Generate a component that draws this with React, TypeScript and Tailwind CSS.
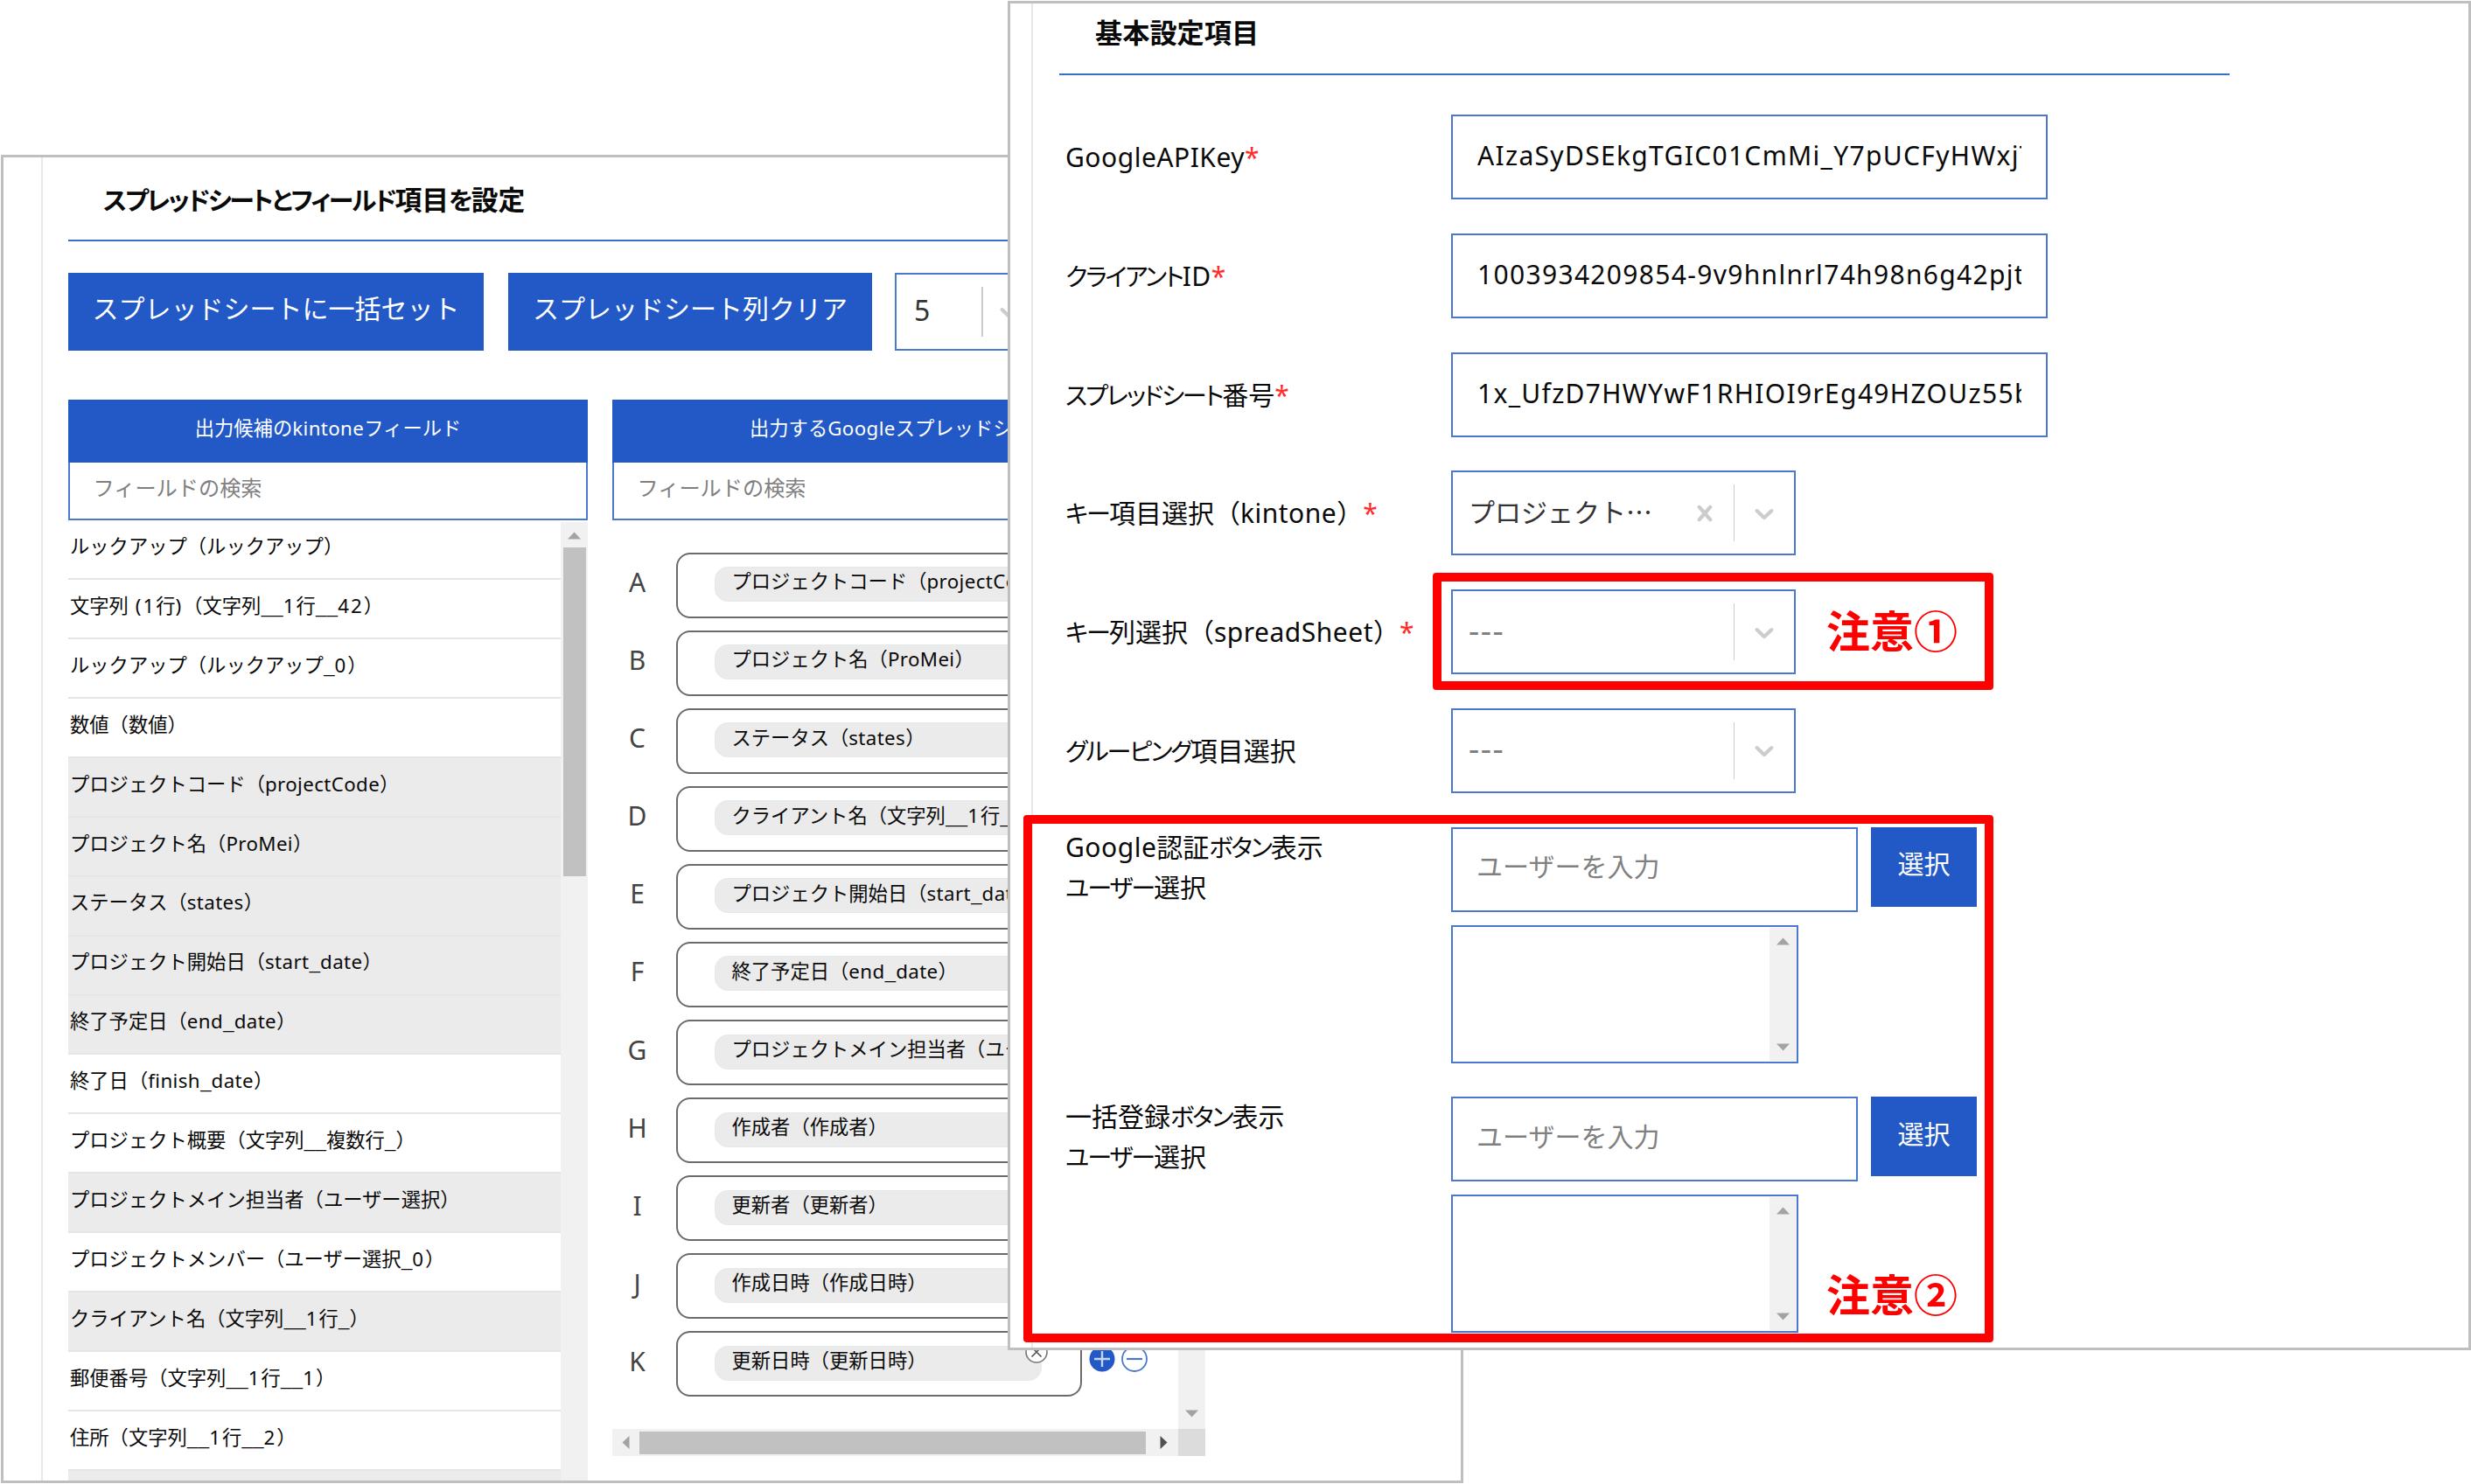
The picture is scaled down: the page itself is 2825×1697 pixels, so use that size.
import React from 'react';
import { clsx } from 'clsx';

type TextVariant = 'full' | 'narrow';

// Latin, digits, underscores and kana each get their own tracking
const TEXT_RUNS = /(_+|[\x20-\x5e\x60-\x7e]+|[\u3041-\u30ff]+)/;

const Mixed: React.FC<{ text: string; variant?: TextVariant }> = ({ text, variant = 'full' }) => (
  <>
    {text.split(TEXT_RUNS).filter(Boolean).map((run, i) => {
      if (run[0] === '_') {
        return <span key={i} className="text-[1.36em] leading-[0] font-light">{run}</span>;
      }
      if (/^[\x20-\x40]/.test(run)) {
        return <span key={i} className="tracking-[0.09em]">{run}</span>;
      }
      if (/^[\x41-\x7e]/.test(run)) {
        return <span key={i} className="tracking-[0.017em]">{run}</span>;
      }
      if (variant === 'narrow' && /^[\u3041-\u30ff]/.test(run)) {
        return <span key={i} className="text-[0.94em] tracking-[-0.075em] [font-feature-settings:'palt']">{run}</span>;
      }
      return <span key={i}>{run}</span>;
    })}
  </>
);

const fields = [
  { label: 'ルックアップ（ルックアップ）' },
  { label: '文字列 (1行)（文字列__1行__42）' },
  { label: 'ルックアップ（ルックアップ_0）' },
  { label: '数値（数値）' },
  { label: 'プロジェクトコード（projectCode）', used: true },
  { label: 'プロジェクト名（ProMei）', used: true },
  { label: 'ステータス（states）', used: true },
  { label: 'プロジェクト開始日（start_date）', used: true },
  { label: '終了予定日（end_date）', used: true },
  { label: '終了日（finish_date）' },
  { label: 'プロジェクト概要（文字列__複数行_）' },
  { label: 'プロジェクトメイン担当者（ユーザー選択）', used: true },
  { label: 'プロジェクトメンバー（ユーザー選択_0）' },
  { label: 'クライアント名（文字列__1行_）', used: true },
  { label: '郵便番号（文字列__1行__1）' },
  { label: '住所（文字列__1行__2）' },
  { label: '', used: true },
];

const columns = [
  ['A', 'プロジェクトコード（projectCode）'],
  ['B', 'プロジェクト名（ProMei）'],
  ['C', 'ステータス（states）'],
  ['D', 'クライアント名（文字列__1行_）'],
  ['E', 'プロジェクト開始日（start_date）'],
  ['F', '終了予定日（end_date）'],
  ['G', 'プロジェクトメイン担当者（ユーザー選択）'],
  ['H', '作成者（作成者）'],
  ['I', '更新者（更新者）'],
  ['J', '作成日時（作成日時）'],
  ['K', '更新日時（更新日時）'],
];

const Triangle: React.FC<{ dir: 'up' | 'down' | 'left' | 'right'; dark?: boolean }> = ({ dir, dark }) => {
  const points = {
    up: '0,11.5 7.5,3.5 15,11.5',
    down: '0,3.5 7.5,11.5 15,3.5',
    left: '11.5,0 3.5,7.5 11.5,15',
    right: '3.5,0 11.5,7.5 3.5,15',
  };
  return (
    <svg width="15" height="15" viewBox="0 0 15 15" className={clsx('shrink-0', dark ? 'fill-[#505050]' : 'fill-[#a3a3a3]')}>
      <polygon points={points[dir]} />
    </svg>
  );
};

const Chevron = () => (
  <svg width="36" height="36" viewBox="0 0 20 20" className="shrink-0 fill-[#cccccc]">
    <path d="M4.516 7.548c0.436-0.446 1.043-0.481 1.576 0l3.908 3.747 3.908-3.747c0.533-0.481 1.141-0.446 1.574 0 0.436 0.445 0.408 1.197 0 1.615-0.406 0.418-4.695 4.502-4.695 4.502-0.217 0.223-0.502 0.335-0.787 0.335s-0.57-0.112-0.789-0.335c0 0-4.287-4.084-4.695-4.502s-0.436-1.17 0-1.615z" />
  </svg>
);

const Cross = () => (
  <svg width="36" height="36" viewBox="0 0 20 20" className="shrink-0 fill-[#cccccc]">
    <path d="M14.348 14.849c-0.469 0.469-1.229 0.469-1.697 0l-2.651-3.030-2.651 3.029c-0.469 0.469-1.229 0.469-1.697 0-0.469-0.469-0.469-1.229 0-1.697l2.758-3.15-2.759-3.152c-0.469-0.469-0.469-1.228 0-1.697s1.228-0.469 1.697 0l2.652 3.031 2.651-3.031c0.469-0.469 1.228-0.469 1.697 0s0.469 1.229 0 1.697l-2.758 3.152 2.758 3.15c0.469 0.469 0.469 1.229 0 1.698z" />
  </svg>
);

const SearchTable: React.FC<{ title: string; className: string; titleClass: string }> = ({ title, className, titleClass }) => (
  <div className={clsx('shrink-0', className)}>
    <div className={clsx('flex h-[72px] items-center bg-[#2259c7] pb-1.5 text-[22.3px] text-white', titleClass)}>
      <span><Mixed text={title} /></span>
    </div>
    <div className="flex h-[66px] items-center border-2 border-t-0 border-[#4a78d0] pb-1.5 pl-[26.5px] text-[24.2px] text-[#808080]">
      フィールドの検索
    </div>
  </div>
);

const FieldList = () => (
  <div className="flex h-[1099px] w-[594px] overflow-hidden">
    <ul className="w-[563px]">
      {fields.map((field, i) => (
        <li
          key={i}
          className={clsx(
            'flex h-[67.94px] items-center border-b-[2.5px] border-[#e2e6e6] pb-1.5 pl-0.5 text-[22.3px]',
            field.used && 'bg-[#ebebeb]'
          )}
        >
          <span><Mixed text={field.label} /></span>
        </li>
      ))}
    </ul>
    <div className="mt-[1.5px] flex w-[31px] flex-col items-center bg-[#f1f1f1] pt-2">
      <Triangle dir="up" />
      <div className="mt-[6.5px] h-[376px] w-[26px] bg-[#c1c1c1]" />
    </div>
  </div>
);

const ColumnRow: React.FC<{ letter: string; label: string; last: boolean }> = ({ letter, label, last }) => (
  <div className="flex h-[75px] shrink-0 items-center">
    <div className="w-[57px] pb-1.5 text-center text-[30px] text-[#444444]">{letter}</div>
    <div className="ml-[15.5px] flex h-full w-[464px] shrink-0 items-center rounded-[16px] border-2 border-[#6b6b6b] pb-0.5 pl-[42px]">
      <div className="relative flex h-[40px] w-[374px] items-center rounded-[15px] border border-[#e4e9e9] bg-[#ebebeb] pb-[5px] pl-[19px] text-[22.3px]">
        <span><Mixed text={label} /></span>
        <svg width="26" height="26" viewBox="0 0 26 26" className="absolute -top-[7px] right-[-8px]">
          <circle cx="13" cy="13" r="12" fill="#fff" stroke="#777" strokeWidth="1.6" />
          <path d="M7.5 7.5l11 11m0-11l-11 11" stroke="#555" strokeWidth="1.7" />
        </svg>
      </div>
    </div>
    {last && (
      <div className="flex gap-[7px] pb-[11px] pl-[8px]">
        <svg width="30" height="30" viewBox="0 0 30 30">
          <circle cx="15" cy="15" r="14.5" fill="#2259c7" />
          <path d="M6 15h18M15 6v18" stroke="#c5d5f2" strokeWidth="2.4" />
        </svg>
        <svg width="30" height="30" viewBox="0 0 30 30">
          <circle cx="15" cy="15" r="14" fill="#fff" stroke="#4a78d0" strokeWidth="1.8" />
          <path d="M6 15h18" stroke="#4a78d0" strokeWidth="2.2" />
        </svg>
      </div>
    )}
  </div>
);

const ColumnList = () => (
  <div className="w-[678px]">
    <div className="flex h-[1039px]">
      <div className="flex w-[647px] flex-col gap-[14.1px] pt-[36.5px]">
        {columns.map(([letter, label], i) => (
          <ColumnRow key={letter} letter={letter} label={label} last={i === columns.length - 1} />
        ))}
      </div>
      <div className="flex w-[31px] flex-col items-center justify-end bg-[#f1f1f1] pb-[10px]">
        <Triangle dir="down" />
      </div>
    </div>
    <div className="flex h-[31px]">
      <div className="flex w-[647px] items-center bg-[#f1f1f1] pl-2">
        <Triangle dir="left" />
        <div className="ml-2 h-[26px] w-[579px] bg-[#c1c1c1]" />
        <div className="ml-[13px]">
          <Triangle dir="right" dark />
        </div>
      </div>
      <div className="w-[31px] bg-[#dcdcdc]" />
    </div>
  </div>
);

const MappingWindow = () => (
  <section className="absolute top-[177px] left-[1px] flex h-[1519px] w-[1672px] overflow-hidden border-[3px] border-[#bfbfbf] bg-white">
    <div className="w-[45px] shrink-0 border-r-2 border-[#e8e8e8]" />
    <div className="w-[1600px] shrink-0 pl-[29px]">
      <h2 className="flex h-[96px] items-center border-b-2 border-[#3a6dce] pt-[3px] pl-[40px] text-[30.8px] font-bold">
        <span><Mixed text="スプレッドシートとフィールド項目を設定" variant="narrow" /></span>
      </h2>
      <div className="mt-[36px] flex h-[89px]">
        <button className="w-[475px] bg-[#2259c7] pb-2 text-[30px] text-white">スプレッドシートに一括セット</button>
        <button className="ml-[28px] w-[416px] bg-[#2259c7] pb-2 text-[30px] text-white">スプレッドシート列クリア</button>
        <div className="ml-[26px] flex w-[180px] items-center border-2 border-[#4a78d0] pl-[20px] text-[32px] text-[#333333]">
          <span className="w-[77px] pb-1">5</span>
          <div className="mr-3 h-[57px] w-[1.5px] bg-[#cccccc]" />
          <Chevron />
        </div>
      </div>
      <div className="mt-[56px] flex">
        <SearchTable title="出力候補のkintoneフィールド" className="w-[594px]" titleClass="justify-center" />
        <SearchTable title="出力するGoogleスプレッドシートの列" className="ml-[28px] w-[678px]" titleClass="pl-[157px]" />
      </div>
      <div className="flex gap-[28px]">
        <FieldList />
        <ColumnList />
      </div>
    </div>
  </section>
);

const FormRow: React.FC<{ label: string[]; required?: boolean; children: React.ReactNode }> = ({ label, required, children }) => (
  <div className="flex">
    <div
      className={clsx(
        'w-[441px] shrink-0 text-[30px] leading-[45px]',
        label.length === 1 && 'pt-[26px]'
      )}
    >
      {label.map((line) => (
        <div key={line}>
          <Mixed text={line} variant="narrow" />
          {required && <span className="text-[#ff2a2a]">*</span>}
        </div>
      ))}
    </div>
    {children}
  </div>
);

const TextField: React.FC<{ value: string }> = ({ value }) => (
  <div className="flex h-[97px] w-[682px] items-center border-2 border-[#4a78d0] px-[28px] pb-1">
    <div className="w-full overflow-hidden text-[30px] leading-[45px] tracking-[0.044em]">{value}</div>
  </div>
);

const SelectField: React.FC<{ value?: string }> = ({ value }) => (
  <div className="flex h-[97px] w-[394px] items-center border-2 border-[#4a78d0] pl-[18px] text-[30px]">
    {value ? (
      <span className="flex-1 pb-1.5 font-['Noto_Sans_CJK_JP',sans-serif] text-[#333333]">{value}</span>
    ) : (
      <span className="flex-1 pb-1.5 text-[38px] tracking-[0.04em] text-[#808080]">---</span>
    )}
    {value && <Cross />}
    <div className="ml-[15px] h-[65px] w-[1.5px] bg-[#cccccc]" />
    <div className="mr-[16px] ml-[16px]">
      <Chevron />
    </div>
  </div>
);

const UserPicker = () => (
  <div>
    <div className="flex">
      <div className="flex h-[97px] w-[465px] items-center border-2 border-[#4a78d0] pb-1.5 pl-[27px] text-[30px] text-[#808080]">
        ユーザーを入力
      </div>
      <button className="ml-[15px] h-[91px] w-[121px] bg-[#2259c7] pb-[6px] text-[30px] text-white">選択</button>
    </div>
    <div className="mt-[15px] flex h-[158px] w-[397px] justify-end border-2 border-[#4a78d0] py-px">
      <div className="flex w-[31px] flex-col items-center justify-between bg-[#f1f1f1] pt-[8px] pb-[8px]">
        <Triangle dir="up" />
        <Triangle dir="down" />
      </div>
    </div>
  </div>
);

const SettingsWindow = () => (
  <section className="absolute top-[1px] left-[1152px] flex h-[1543px] w-[1673px] overflow-hidden border-[3px] border-[#bfbfbf] bg-white">
    <div className="w-[26px] shrink-0 border-r-2 border-[#e8e8e8]" />
    <div className="pl-[30px]">
      <h2 className="flex h-[82px] w-[1338px] items-center border-b-[2.5px] border-[#3a6dce] pb-[13px] pl-[41px] text-[31.2px] font-bold">
        基本設定項目
      </h2>
      <div className="flex flex-col gap-[38.75px] pt-[45px] pl-[7px]">
        <FormRow label={['GoogleAPIKey']} required>
          <TextField value="AIzaSyDSEkgTGIC01CmMi_Y7pUCFyHWxjT" />
        </FormRow>
        <FormRow label={['クライアントID']} required>
          <TextField value="1003934209854-9v9hnlnrl74h98n6g42pjt" />
        </FormRow>
        <FormRow label={['スプレッドシート番号']} required>
          <TextField value="1x_UfzD7HWYwF1RHIOI9rEg49HZOUz55b" />
        </FormRow>
        <FormRow label={['キー項目選択（kintone）']} required>
          <SelectField value="プロジェクト…" />
        </FormRow>
        <FormRow label={['キー列選択（spreadSheet）']} required>
          <SelectField />
        </FormRow>
        <FormRow label={['グルーピング項目選択']}>
          <SelectField />
        </FormRow>
        <FormRow label={['Google認証ボタン表示', 'ユーザー選択']}>
          <UserPicker />
        </FormRow>
        <FormRow label={['一括登録ボタン表示', 'ユーザー選択']}>
          <UserPicker />
        </FormRow>
      </div>
    </div>
  </section>
);

export default function App() {
  return (
    <main className="relative h-[1697px] w-[2825px] overflow-hidden whitespace-nowrap bg-white font-['Noto_Sans','Noto_Sans_CJK_JP',sans-serif] leading-none text-[#0a0a0a]">
      <MappingWindow />
      <SettingsWindow />

      {/* callouts on top of the settings window */}
      <div className="absolute top-[655px] left-[1638px] flex h-[134px] w-[641px] items-center justify-end rounded-[4px] border-[10px] border-[#ff0000] pr-[31px] text-[50px] font-bold text-[#ff0000]">
        注意①
      </div>
      <div className="absolute top-[932px] left-[1170px] flex h-[603px] w-[1109px] items-end justify-end rounded-[4px] border-[10px] border-[#ff0000] pr-[31px] pb-[19px] text-[50px] font-bold text-[#ff0000]">
        注意②
      </div>
    </main>
  );
}
